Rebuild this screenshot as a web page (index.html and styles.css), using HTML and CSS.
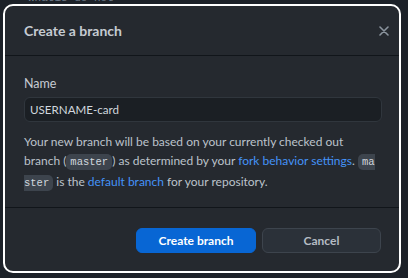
FILE: index.html
```html
<!DOCTYPE html>
<html>
<head>
<meta charset="utf-8">
<link rel="stylesheet" href="styles.css">
</head>
<body>
<div class="backdrop-strip"><span class="backdrop-text">whatis-do-not</span></div>
<div class="dialog">
  <div class="dialog-header">
    <h1 class="dialog-title">Create a branch</h1>
    <button class="close-btn" aria-label="Close">
      <svg width="10" height="10" viewBox="0 0 10 10"><path d="M1 1 L9 9 M9 1 L1 9" stroke="currentColor" stroke-width="1.6" stroke-linecap="round"/></svg>
    </button>
  </div>
  <div class="dialog-body">
    <label class="field-label">Name</label>
    <div class="text-input">USERNAME-card</div>
    <p class="note">Your new branch will be based on your currently checked out branch (<code class="code">master</code>) as determined by your <a class="link">fork behavior settings</a>. <code class="code break">master</code> is the <a class="link">default branch</a> for your repository.</p>
  </div>
  <div class="dialog-footer">
    <button class="btn btn-primary">Create branch</button>
    <button class="btn btn-secondary">Cancel</button>
  </div>
</div>
</body>
</html>
```
FILE: styles.css
```css
html, body {
  margin: 0;
  padding: 0;
}
body {
  background: #1c2128;
  width: 408px;
  height: 278px;
  overflow: hidden;
  font-family: Lato, "Noto Sans", sans-serif;
}
.backdrop-strip {
  height: 4px;
  overflow: hidden;
  padding-left: 28px;
}
.backdrop-text {
  display: block;
  margin-top: -8px;
  font: 11px/12px "Liberation Mono", monospace;
  color: #6e7a88;
}
.dialog {
  margin-left: 3px;
  width: 394px;
  height: 265px;
  border: 2px solid #ffffff;
  border-radius: 10px;
  background: #25292f;
  display: flex;
  flex-direction: column;
}
.dialog-header {
  height: 49px;
  display: flex;
  align-items: center;
  justify-content: space-between;
  padding: 0 6px 0 19px;
  border-bottom: 1px solid #11151a;
}
.dialog-title {
  margin: 0 0 1px;
  font-size: 14px;
  font-weight: 700;
  color: #c5cbd2;
}
.close-btn {
  background: none;
  border: 0;
  padding: 4px;
  color: #8b949e;
  display: flex;
}
.dialog-body {
  padding: 18px 17px 0 19px;
  height: 133px;
  border-bottom: 1px solid #11151a;
}
.field-label {
  display: block;
  font-size: 12.5px;
  line-height: 20px;
  color: #c5cbd2;
  margin-bottom: 3px;
}
.text-input {
  height: 23px;
  border: 1px solid #30363d;
  border-radius: 6px;
  background: #1b1f24;
  color: #d1d7de;
  font-size: 11.6px;
  line-height: 23px;
  padding: 0 5px;
}
.note {
  margin: 10px 0 0;
  padding-right: 3px;
  font-size: 12px;
  line-height: 19px;
  color: #bcc3cb;
}
.code {
  font-family: "Liberation Mono", monospace;
  font-size: 10.5px;
  background: #3d444d;
  color: #d1d7de;
  border-radius: 5px;
  padding: 2px 4px;
}
.break {
  word-break: break-all;
}
.link {
  color: #4493f8;
}
.dialog-footer {
  flex: 1;
  display: flex;
  justify-content: flex-end;
  align-items: flex-start;
  gap: 6px;
  padding: 20px 18px 0 0;
}
.btn {
  height: 25px;
  width: 120px;
  border-radius: 6px;
  font-family: inherit;
  font-size: 12px;
  font-weight: 700;
  padding: 0;
}
.btn-primary {
  background: #0866d4;
  border: 1px solid #0866d4;
  color: #ffffff;
}
.btn-secondary {
  width: 119px;
  background: #2b3139;
  border: 1px solid #3d444d;
  color: #b5bcc4;
}
```
